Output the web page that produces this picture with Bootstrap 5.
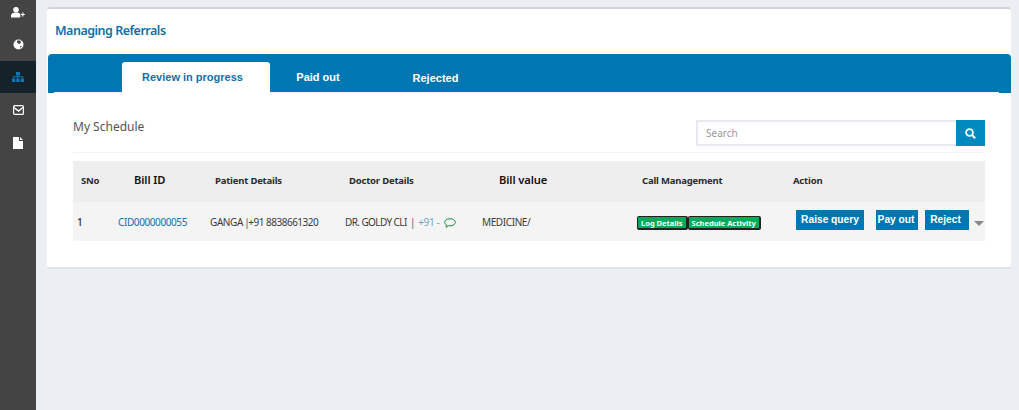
<!DOCTYPE html>
<html lang="en">
<head>
<meta charset="utf-8">
<title>Managing Referrals</title>
<link rel="stylesheet" href="https://cdn.jsdelivr.net/npm/bootstrap@5.3.0/dist/css/bootstrap.min.css">
<style>
html,body{height:100%}
body{background:#ebeff4;font-family:"Noto Sans","Open Sans",sans-serif;font-size:10px;letter-spacing:-.4px;color:#3a3a3a;overflow:hidden}
.shell{height:410px}
.rail{width:36px;background:#444;flex:none}
.rail-item{height:33px;color:#fff}
.rail-item.active-item{background:#14232a;color:#0a78b5;height:32px}
.rail-top-item{height:28px;color:#fff}
.stage{padding:7px 8px 0 11px;flex:1;min-width:0}
.panel{background:#fff;border-top:2px solid #cfd3dd;border-bottom:2px solid #dfe3ea;border-radius:3px;height:262px}
.panel-title{font-size:12.5px;font-weight:600;letter-spacing:-.5px;color:#0f70a8;padding:13px 0 0 8px;height:45px;line-height:18px}
.tabbar{background:#0077b2;height:39px;margin-left:1px;padding:8px 0 0 74px;border-radius:4px 4px 0 0;position:relative}
.tabbar::after{content:"";position:absolute;left:6px;right:12px;bottom:0;height:1px;background:#eef3f7}
.tab-item{font-family:"Liberation Sans",Arial,sans-serif;font-weight:700;font-size:11px;letter-spacing:0;color:#fff;height:31px;line-height:31px;text-align:center;text-decoration:none;position:relative;z-index:1}
.tab-item.on{background:#fff;color:#0f70a8;width:148px;border-radius:3px 3px 0 0;padding-right:7px}
.tab-paid{width:96px}
.tab-rej{width:139px;padding-top:1px}
.sched-head{margin:0 26px;height:60px;border-bottom:1px solid #f2f3f5}
.sched-title{font-size:12px;letter-spacing:0;color:#555;line-height:16px;margin-top:26px}
.search-box{width:289px;height:26px;margin-top:27px}
.search-field{flex:1;border:2px solid #e6e9ef;border-right:0;font-size:10px;letter-spacing:0;color:#999;padding-left:8px;line-height:22px}
.search-btn{width:29px;background:#0089bd}
.grid-wrap{margin:8px 26px 0;width:912px}
.ref-table{width:912px;table-layout:fixed;border-collapse:collapse}
.ref-table th{background:#eee;height:41px;font-size:9.5px;font-weight:700;letter-spacing:-.2px;color:#2b2b2b;vertical-align:middle;padding:0}
.ref-table td{background:#f4f4f4;height:39px;vertical-align:middle;padding:2px 0 0 4px;white-space:nowrap;color:#3a3a3a}
.ref-table th.big{font-size:11.2px;font-weight:600;letter-spacing:-.1px;color:#111;padding-bottom:2px}
.ref-link{color:#0f70a8;text-decoration:none}
.sep{color:#555;margin:0 -1px}
.pat-num{letter-spacing:-.5px}
.doc-name{letter-spacing:-.6px}
.doc-sep{color:#555;margin:0 1px}
.chat-mark{margin-left:3px}
.muted-num{color:#6fa3c4}
.row-no{color:#2b2b2b;letter-spacing:0;font-weight:500}
.call-tag{display:inline-block;background:#05a95c;color:#fff;font-size:7.5px;font-weight:700;letter-spacing:0;height:14px;line-height:12px;padding:0 3px;border:1px solid #222;border-width:1px 2px 2px 1px;border-radius:2px;vertical-align:middle}
.action-cell{padding-bottom:4px!important;padding-top:0!important}
.act{font-family:"Liberation Sans",Arial,sans-serif;background:#0077b2;color:#fff;font-size:10.2px;letter-spacing:0;font-weight:700;height:20px;line-height:19px;border:0;border-radius:0;padding:0;display:inline-block;text-align:center;vertical-align:top}
.act-q{width:68px;line-height:17px}
.act-p{width:42px;margin-left:12px;padding-right:2px}
.act-r{width:44px;margin-left:7px;padding-right:3px}
.caret-mark{display:inline-block;border:5px solid transparent;border-top:5px solid #888;border-bottom:0;margin-left:5px;vertical-align:top;margin-top:11px}
</style>
</head>
<body>
<div class="d-flex shell">
  <nav class="rail d-flex flex-column">
    <div class="rail-top-item d-flex align-items-center justify-content-center pb-1">
      <svg width="14" height="11" viewBox="0 0 14 11"><circle cx="5" cy="2.800" r="2.800" fill="#fff"/><path d="M0 10.500V8.500C0 6.500 2 5.500 5 5.500s4 .8 4.300 2v3z" fill="#fff"/><path d="M9.800 7.500h4M11.800 5.500v4" stroke="#fff" stroke-width="1.200"/></svg>
    </div>
    <div class="rail-item d-flex align-items-center justify-content-center">
      <svg width="11" height="11" viewBox="0 0 11 11"><circle cx="5.500" cy="5.500" r="5" fill="#fff"/><path d="M4 1.500l3.500 0 .5 2.500-2 1-2-1.500zM7 7l2 0-1.500 2z" fill="#444"/></svg>
    </div>
    <div class="rail-item active-item d-flex align-items-center justify-content-center">
      <svg width="12" height="10" viewBox="0 0 12 10" fill="currentColor"><rect x="4" y="0" width="4" height="3.500"/><rect x="0" y="6.500" width="3.300" height="3.500"/><rect x="4.300" y="6.500" width="3.300" height="3.500"/><rect x="8.700" y="6.500" width="3.300" height="3.500"/><path d="M1.200 6.500V4.700h9.600v1.800M5.500 3.500v3" stroke="currentColor" fill="none"/></svg>
    </div>
    <div class="rail-item d-flex align-items-center justify-content-center">
      <svg width="11" height="10" viewBox="0 0 11 10" fill="none" stroke="#fff"><rect x=".6" y=".6" width="9.800" height="8.800" rx="1" stroke-width="1.200"/><path d="M1 2.500l4.500 3.500L10 2.500" stroke-width="1.400"/></svg>
    </div>
    <div class="rail-item d-flex align-items-center justify-content-center">
      <svg width="10" height="12" viewBox="0 0 10 12"><path d="M0 0h6v4h4v8H0zM7 0l3 3H7z" fill="#fff"/></svg>
    </div>
  </nav>
  <main class="stage">
    <section class="panel">
      <div class="panel-title">Managing Referrals</div>
      <div class="tabbar d-flex">
        <a class="tab-item on" href="#">Review in progress</a>
        <a class="tab-item tab-paid" href="#">Paid out</a>
        <a class="tab-item tab-rej" href="#">Rejected</a>
      </div>
      <div class="sched-head d-flex justify-content-between">
        <div class="sched-title">My Schedule</div>
        <div class="search-box d-flex">
          <div class="search-field">Search</div>
          <div class="search-btn d-flex align-items-center justify-content-center">
            <svg width="11" height="11" viewBox="0 0 11 11" fill="none" stroke="#fff"><circle cx="4.500" cy="4.500" r="3.400" stroke-width="1.800"/><path d="M7 7l3.200 3.200" stroke-width="2"/></svg>
          </div>
        </div>
      </div>
      <div class="grid-wrap">
        <table class="ref-table">
          <colgroup><col style="width:41px"><col style="width:92px"><col style="width:135px"><col style="width:137px"><col style="width:155px"><col style="width:159px"><col style="width:193px"></colgroup>
          <thead>
            <tr>
              <th style="padding-left:8px">SNo</th>
              <th class="big" style="padding-left:20px">Bill ID</th>
              <th style="padding-left:9px">Patient Details</th>
              <th style="padding-left:8px">Doctor Details</th>
              <th class="big" style="padding-left:21px">Bill value</th>
              <th style="padding-left:9px">Call Management</th>
              <th style="padding-left:1px">Action</th>
            </tr>
          </thead>
          <tbody>
            <tr>
              <td><span class="row-no">1</span></td>
              <td><a class="ref-link" href="#">CID0000000055</a></td>
              <td>GANGA <span class="sep">|</span><span class="pat-num">+91 8838661320</span></td>
              <td><span class="doc-name">DR. GOLDY CLI</span> <span class="doc-sep">|</span> <span class="muted-num">+91 -</span>
                <svg class="chat-mark" width="12" height="10" viewBox="0 0 12 10" fill="none" stroke="#1a8a4a"><path d="M6 .7c3 0 5.300 1.500 5.300 3.600S9 7.900 6 7.900c-.6 0-1.200 0-1.700-.2L2 9.300l.5-2.200C1.300 6.400.7 5.400.7 4.300.7 2.200 3 .7 6 .7z"/></svg>
              </td>
              <td>MEDICINE/</td>
              <td><span class="call-tag">Log Details</span><span class="call-tag">Schedule Activity</span></td>
              <td class="action-cell"><button class="act act-q" type="button">Raise query</button><button class="act act-p" type="button">Pay out</button><button class="act act-r" type="button">Reject</button><span class="caret-mark"></span></td>
            </tr>
          </tbody>
        </table>
      </div>
    </section>
  </main>
</div>
<script src="https://cdn.jsdelivr.net/npm/bootstrap@5.3.0/dist/js/bootstrap.bundle.min.js"></script>
</body>
</html>
